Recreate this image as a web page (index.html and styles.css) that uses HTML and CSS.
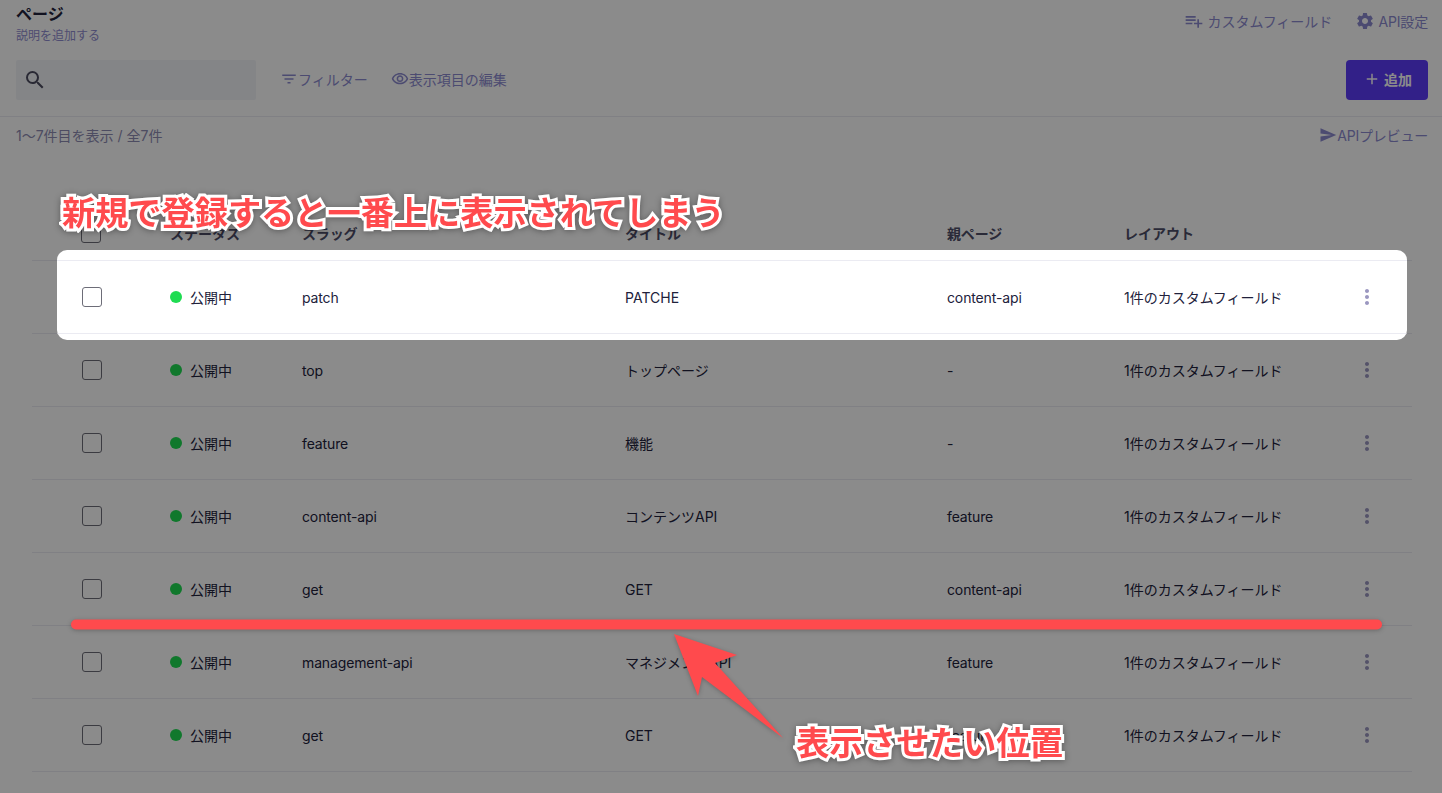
FILE: index.html
```html
<!DOCTYPE html>
<html lang="ja">
<head>
  <meta charset="UTF-8" />
  <title>ページ</title>
  <link rel="stylesheet" href="styles.css">
</head>
<body>
  <svg class="defs" width="0" height="0">
    <symbol id="i-search" viewBox="0 0 24 24"><path d="M15.5 14h-.79l-.28-.27A6.471 6.471 0 0 0 16 9.5 6.5 6.5 0 1 0 9.5 16c1.61 0 3.09-.59 4.23-1.57l.27.28v.79l5 4.99L20.49 19l-4.99-5zm-6 0C7.01 14 5 11.99 5 9.5S7.01 5 9.5 5 14 7.01 14 9.5 11.99 14 9.5 14z"/></symbol>
    <symbol id="i-filter" viewBox="0 0 24 24"><path d="M10 18h4v-2h-4v2zM3 6v2h18V6H3zm3 7h12v-2H6v2z"/></symbol>
    <symbol id="i-eye" viewBox="0 0 24 24"><path d="M12 6a9.77 9.77 0 0 1 8.82 5.5C19.17 14.87 15.79 17 12 17s-7.17-2.13-8.82-5.5A9.77 9.77 0 0 1 12 6m0-2C7 4 2.73 7.11 1 11.5 2.73 15.89 7 19 12 19s9.27-3.11 11-7.5C21.27 7.11 17 4 12 4zm0 5a2.5 2.5 0 0 1 0 5 2.5 2.5 0 0 1 0-5m0-2c-2.48 0-4.5 2.02-4.5 4.5S9.52 16 12 16s4.5-2.02 4.5-4.5S14.48 7 12 7z"/></symbol>
    <symbol id="i-playlist" viewBox="0 0 24 24"><path d="M14 10H2v2h12v-2zm0-4H2v2h12V6zm4 8v-4h-2v4h-4v2h4v4h2v-4h4v-2h-4zM2 16h8v-2H2v2z"/></symbol>
    <symbol id="i-gear" viewBox="0 0 24 24"><path d="M19.14 12.94c.04-.3.06-.61.06-.94 0-.32-.02-.64-.07-.94l2.03-1.58a.49.49 0 0 0 .12-.61l-1.92-3.32a.488.488 0 0 0-.59-.22l-2.39.96c-.5-.38-1.03-.7-1.62-.94l-.36-2.54a.484.484 0 0 0-.48-.41h-3.84c-.24 0-.43.17-.47.41l-.36 2.54c-.59.24-1.13.57-1.62.94l-2.39-.96c-.22-.08-.47 0-.59.22L2.74 8.87c-.12.21-.08.47.12.61l2.03 1.58c-.05.3-.09.63-.09.94s.02.64.07.94l-2.03 1.58a.49.49 0 0 0-.12.61l1.92 3.32c.12.22.37.29.59.22l2.39-.96c.5.38 1.03.7 1.62.94l.36 2.54c.05.24.24.41.48.41h3.84c.24 0 .44-.17.47-.41l.36-2.54c.59-.24 1.13-.56 1.62-.94l2.39.96c.22.08.47 0 .59-.22l1.92-3.32c.12-.22.07-.47-.12-.61l-2.01-1.58zM12 15.6c-1.98 0-3.6-1.62-3.6-3.6s1.62-3.6 3.6-3.6 3.6 1.62 3.6 3.6-1.62 3.6-3.6 3.6z"/></symbol>
    <symbol id="i-add" viewBox="0 0 24 24"><path d="M19 13h-6v6h-2v-6H5v-2h6V5h2v6h6v2z"/></symbol>
    <symbol id="i-send" viewBox="0 0 24 24"><path d="M2.01 21 23 12 2.01 3 2 10l15 2-15 2z"/></symbol>
    <symbol id="i-more" viewBox="0 0 24 24"><path d="M12 8c1.1 0 2-.9 2-2s-.9-2-2-2-2 .9-2 2 .9 2 2 2zm0 2c-1.1 0-2 .9-2 2s.9 2 2 2 2-.9 2-2-.9-2-2-2zm0 6c-1.1 0-2 .9-2 2s.9 2 2 2 2-.9 2-2-.9-2-2-2z"/></symbol>
  </svg>

  <div class="page">
    <header class="page-head">
      <div>
        <h1>ページ</h1>
        <p class="desc">説明を追加する</p>
      </div>
      <div class="head-links">
        <a class="link"><svg class="icon icon-lg"><use href="#i-playlist"/></svg><span class="gap-text">カスタムフィールド</span></a>
        <a class="link"><svg class="icon icon-lg"><use href="#i-gear"/></svg><span class="gap-text api-text">API設定</span></a>
      </div>
    </header>

    <div class="toolbar">
      <div class="search"><svg class="icon search-icon"><use href="#i-search"/></svg></div>
      <a class="link tool-link tool-first"><svg class="icon"><use href="#i-filter"/></svg>フィルター</a>
      <a class="link tool-link"><svg class="icon"><use href="#i-eye"/></svg>表示項目の編集</a>
      <button class="add-btn"><svg class="icon"><use href="#i-add"/></svg>追加</button>
    </div>

    <div class="count-row">
      <span class="count">1〜7件目を表示 / 全7件</span>
      <a class="link preview"><svg class="icon"><use href="#i-send"/></svg>APIプレビュー</a>
    </div>

    <div class="table">
      <div class="row head-row">
        <div><span class="check"></span></div>
        <div>ステータス</div>
        <div>スラッグ</div>
        <div>タイトル</div>
        <div>親ページ</div>
        <div>レイアウト</div>
        <div></div>
      </div>
      <div class="row">
        <div><span class="check"></span></div>
        <div class="status"><i class="dot"></i>公開中</div>
        <div>patch</div>
        <div>PATCHE</div>
        <div>content-api</div>
        <div>1件のカスタムフィールド</div>
        <div><svg class="icon more"><use href="#i-more"/></svg></div>
      </div>
      <div class="row">
        <div><span class="check"></span></div>
        <div class="status"><i class="dot"></i>公開中</div>
        <div>top</div>
        <div>トップページ</div>
        <div>-</div>
        <div>1件のカスタムフィールド</div>
        <div><svg class="icon more"><use href="#i-more"/></svg></div>
      </div>
      <div class="row">
        <div><span class="check"></span></div>
        <div class="status"><i class="dot"></i>公開中</div>
        <div>feature</div>
        <div>機能</div>
        <div>-</div>
        <div>1件のカスタムフィールド</div>
        <div><svg class="icon more"><use href="#i-more"/></svg></div>
      </div>
      <div class="row">
        <div><span class="check"></span></div>
        <div class="status"><i class="dot"></i>公開中</div>
        <div>content-api</div>
        <div>コンテンツAPI</div>
        <div>feature</div>
        <div>1件のカスタムフィールド</div>
        <div><svg class="icon more"><use href="#i-more"/></svg></div>
      </div>
      <div class="row">
        <div><span class="check"></span></div>
        <div class="status"><i class="dot"></i>公開中</div>
        <div>get</div>
        <div>GET</div>
        <div>content-api</div>
        <div>1件のカスタムフィールド</div>
        <div><svg class="icon more"><use href="#i-more"/></svg></div>
      </div>
      <div class="row">
        <div><span class="check"></span></div>
        <div class="status"><i class="dot"></i>公開中</div>
        <div>management-api</div>
        <div>マネジメントAPI</div>
        <div>feature</div>
        <div>1件のカスタムフィールド</div>
        <div><svg class="icon more"><use href="#i-more"/></svg></div>
      </div>
      <div class="row">
        <div><span class="check"></span></div>
        <div class="status"><i class="dot"></i>公開中</div>
        <div>get</div>
        <div>GET</div>
        <div>feature</div>
        <div>1件のカスタムフィールド</div>
        <div><svg class="icon more"><use href="#i-more"/></svg></div>
      </div>
    </div>
  </div>

  <!-- screenshot annotations on top of the page -->
  <div class="dim"></div>

  <div class="spotlight">
    <div class="row">
      <div><span class="check"></span></div>
      <div class="status"><i class="dot"></i>公開中</div>
      <div>patch</div>
      <div>PATCHE</div>
      <div>content-api</div>
      <div>1件のカスタムフィールド</div>
      <div><svg class="icon more"><use href="#i-more"/></svg></div>
    </div>
  </div>

  <svg class="marks" width="1442" height="793" viewBox="0 0 1442 793">
    <line class="mark-line" x1="76" y1="624.5" x2="1377" y2="624.5"/>
    <polygon class="mark-arrow" points="674,634 737,655 715,663 783,738 702,677 698,696"/>
  </svg>
  <p class="note note-top">新規で登録すると一番上に表示されてしまう</p>
  <p class="note note-bottom">表示させたい位置</p>
</body>
</html>
```

FILE: styles.css
```css
* {
  margin: 0;
  padding: 0;
  box-sizing: border-box;
}

html, body {
  height: 793px;
  overflow: hidden;
  background-color: #fff;
  font-family: Inter, 'Noto Sans CJK JP', sans-serif;
  font-size: 14px;
  color: #21213b;
}

.defs {
  position: absolute;
}

.icon {
  width: 18px;
  height: 18px;
  fill: currentColor;
  flex-shrink: 0;
}

.icon-lg {
  width: 20px;
  height: 20px;
}

.page-head {
  display: flex;
  justify-content: space-between;
  padding: 2px 14px 0 16px;
  height: 60px;
}

h1 {
  font-size: 16px;
  line-height: 24px;
  font-weight: 700;
}

.desc {
  font-size: 12px;
  line-height: 18px;
  margin-top: 1px;
  color: #8f8cd0;
}

.head-links {
  display: flex;
  gap: 23px;
  margin-top: 7px;
  height: 24px;
}

.link {
  display: flex;
  align-items: center;
  color: #8c8ad0;
  white-space: nowrap;
}

.gap-text {
  margin-left: 3px;
}

.api-text {
  letter-spacing: -0.15px;
}

.toolbar {
  display: flex;
  align-items: center;
  height: 57px;
  padding: 0 14px 17px 16px;
  border-bottom: 1px solid #ebebf2;
  gap: 8px;
}

.search {
  width: 240px;
  height: 40px;
  display: flex;
  align-items: center;
  padding-left: 7px;
  background-color: #f3f5f8;
  border-radius: 2px;
}

.search-icon {
  width: 24px;
  height: 24px;
  color: #4c4c60;
}

.tool-link {
  margin-bottom: 2px;
}

.tool-first {
  margin-left: 16px;
  margin-right: 15px;
}

.add-btn {
  margin-left: auto;
  display: flex;
  align-items: center;
  gap: 3px;
  height: 40px;
  width: 82px;
  padding: 0 0 2px 17px;
  border: none;
  border-radius: 4px;
  background-color: #5c3bfa;
  color: #fff;
  font-family: inherit;
  font-size: 14px;
  font-weight: 700;
}

.count-row {
  display: flex;
  justify-content: space-between;
  align-items: center;
  height: 36px;
  padding: 0 14px 0 16px;
}

.count {
  color: #8d8bb2;
}

.preview {
  letter-spacing: -0.2px;
}

.table {
  margin: 62px 30px 0 32px;
}

.row {
  display: grid;
  grid-template-columns: 138px 132px 323px 322px 177px 236px 52px;
  align-items: center;
  height: 73px;
  border-bottom: 1px solid #ebebf2;
  white-space: nowrap;
}

.row > div:first-child {
  padding-left: 50px;
}

.row > div:nth-child(3),
.row > div:nth-child(5) {
  letter-spacing: -0.13px;
}

.head-row {
  height: 46px;
  padding-bottom: 9px;
  font-weight: 700;
  color: #4d4d68;
}

.head-row .check {
  margin-left: -1px;
}

.check {
  display: block;
  width: 20px;
  height: 20px;
  background-color: #fff;
  border: 1px solid #6d6d78;
  border-radius: 3px;
}

.status {
  display: flex;
  align-items: center;
}

.dot {
  width: 12px;
  height: 12px;
  margin-right: 8px;
  border-radius: 50%;
  background-color: #1fdc52;
}

.more {
  display: block;
  width: 24px;
  height: 24px;
  margin-left: -5px;
  color: #9b97c0;
}

/* annotations */
.dim {
  position: absolute;
  inset: 0;
  background-color: rgba(0, 0, 0, 0.455);
}

.spotlight {
  position: absolute;
  left: 57px;
  top: 250px;
  width: 1350px;
  height: 90px;
  padding-top: 10px;
  background-color: #fff;
  border-radius: 10px;
  overflow: hidden;
}

.spotlight .row {
  width: 1380px;
  margin-left: -25px;
  border-top: 1px solid #ebebf2;
  height: 74px;
}

.marks {
  position: absolute;
  left: 0;
  top: 0;
  filter: drop-shadow(0 1px 2px rgba(0, 0, 0, 0.25));
}

.mark-line {
  stroke: #ff4a4d;
  stroke-width: 10;
  stroke-linecap: round;
}

.mark-arrow {
  fill: #ff4a4d;
}

.note {
  position: absolute;
  font-weight: 700;
  color: #ff4a4d;
  white-space: nowrap;
  -webkit-text-stroke: 6px #fff;
  paint-order: stroke fill;
  filter: drop-shadow(0 1px 3px rgba(0, 0, 0, 0.35));
}

.note-top {
  left: 62px;
  top: 190px;
  font-size: 33.2px;
  line-height: 46px;
}

.note-bottom {
  left: 796px;
  top: 719px;
  font-size: 33.4px;
  line-height: 48px;
}
```
